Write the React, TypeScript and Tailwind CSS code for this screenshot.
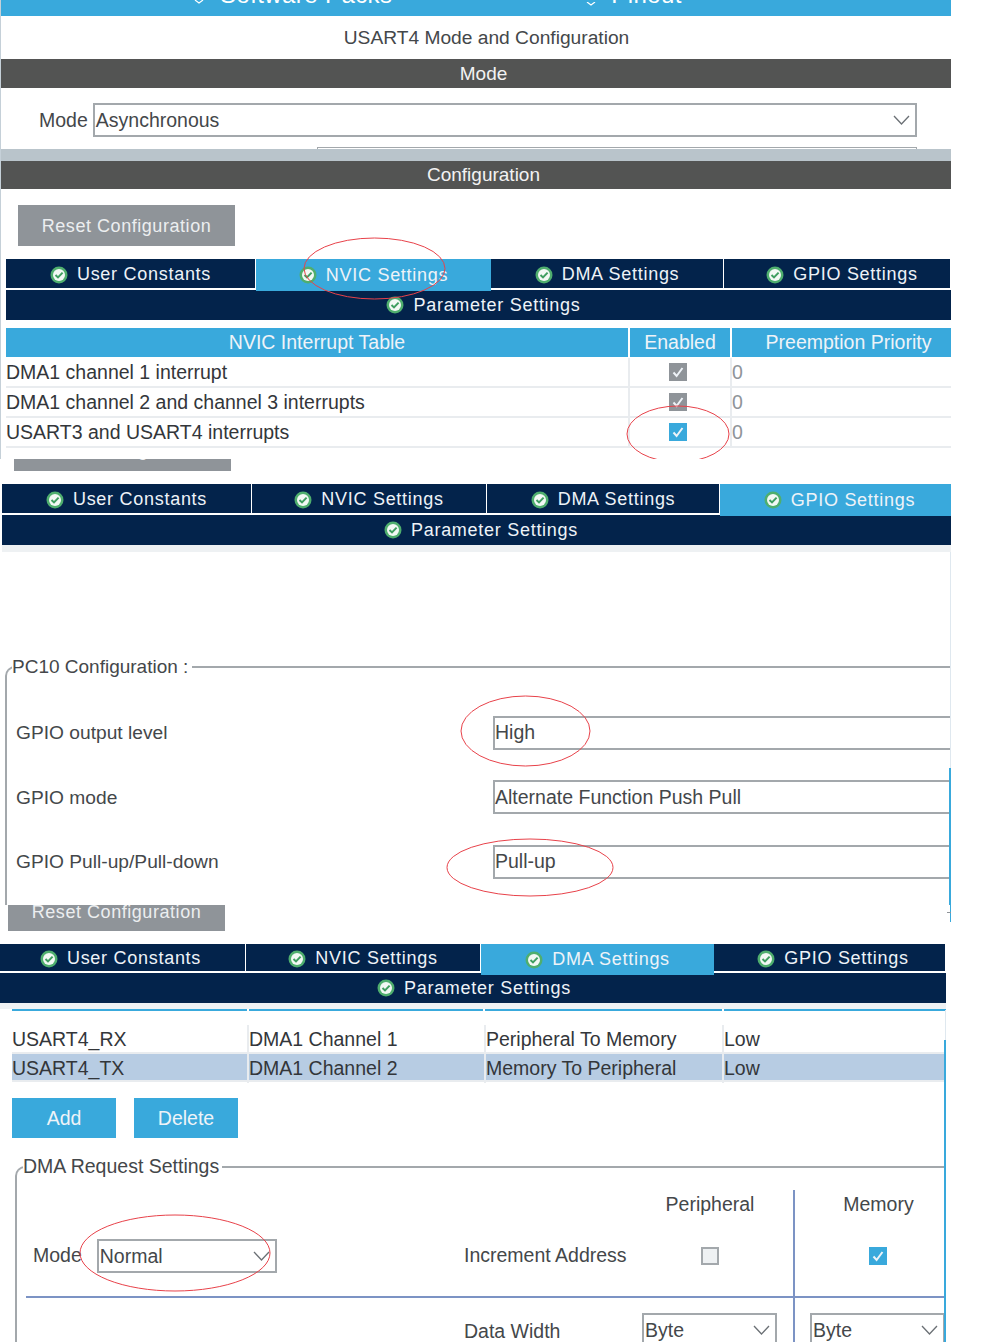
const textFont = "font-['Liberation_Sans',Arial,sans-serif]";

function TabIcon() {
  return (
    <svg width="18" height="18" viewBox="0 0 18 18" className="shrink-0">
      <circle cx="9" cy="9" r="8.5" fill="#4fae6e" />
      <circle cx="9" cy="9" r="6" fill="#f2f8f4" />
      <path d="M5.5 9 L8 11.4 L12.6 6.6" fill="none" stroke="#3f9e60" strokeWidth="2" />
    </svg>
  );
}

function Tab({ label, width, active, compact }: { label: string; width: string; active?: boolean; compact?: boolean }) {
  const idle = compact ? 'h-[29px] pt-[2px]' : 'h-[31px] pt-[2px]';
  const current = compact ? 'h-[31px]' : 'h-[32px]';
  return (
    <div
      className={`${width} flex items-center justify-center gap-[9px] text-[#eef3f8] ${
        active ? `relative z-10 bg-[#39a9dc] ${current}` : `border-r border-b-2 border-white bg-[#03234b] ${idle}`
      }`}
    >
      <TabIcon />
      <span className="tracking-[0.72px]">{label}</span>
    </div>
  );
}

function TabBar({ widths, active, paramPad, compact }: { widths: string[]; active: string; paramPad: string; compact?: boolean }) {
  const names = ['User Constants', 'NVIC Settings', 'DMA Settings', 'GPIO Settings'];
  return (
    <div className="text-[18px]">
      <div className={`flex items-start ${compact ? 'h-[29px]' : 'h-[31px]'}`}>
        {names.map((name, i) => (
          <Tab key={name} label={name} width={widths[i]} active={name === active} compact={compact} />
        ))}
      </div>
      <div className={`flex h-[30px] items-center justify-center gap-[9px] bg-[#03234b] text-[#eef3f8] ${paramPad}`}>
        <TabIcon />
        <span className="tracking-[0.72px]">Parameter Settings</span>
      </div>
    </div>
  );
}

function Check({ color }: { color: string }) {
  return (
    <div className={`flex h-[18px] w-[18px] items-center justify-center ${color}`}>
      <svg width="14" height="14" viewBox="0 0 14 14">
        <path d="M2.5 7.5 L5.6 11 L11.5 3" fill="none" stroke="#eef3f8" strokeWidth="2" />
      </svg>
    </div>
  );
}

function Chevron() {
  return (
    <svg width="17" height="10" viewBox="0 0 17 10" className="shrink-0">
      <path d="M1 1 L8.5 9 L16 1" fill="none" stroke="#6b7075" strokeWidth="1.3" />
    </svg>
  );
}

function Select({ value, className }: { value: string; className: string }) {
  return (
    <div className={`flex h-[34px] items-center justify-between border-2 border-[#a3a8ac] bg-white pl-[1px] pr-[5px] text-[#44474a] ${className}`}>
      <span className="pt-[1px]">{value}</span>
      <Chevron />
    </div>
  );
}

function Ring({ className, w, h }: { className: string; w: number; h: number }) {
  return (
    <svg width={w} height={h} viewBox={`0 0 ${w} ${h}`} className={`pointer-events-none absolute z-20 ${className}`}>
      <ellipse cx={w / 2} cy={h / 2} rx={w / 2 - 1} ry={h / 2 - 1} fill="none" stroke="#e8424a" strokeWidth="1" />
    </svg>
  );
}

function GreyButton({ className }: { className: string }) {
  return (
    <div className={`flex h-[41px] w-[217px] items-center justify-center bg-[#8f9499] text-[18px] tracking-[0.55px] text-[#eceef0] ${className}`}>
      Reset Configuration
    </div>
  );
}

function DarkBar({ label, height }: { label: string; height: string }) {
  return <div className={`flex items-center justify-center bg-[#535453] pl-[15px] text-[19px] text-[#f2f2f2] ${height}`}>{label}</div>;
}

function TopMark() {
  return (
    <svg width="10" height="4" viewBox="0 0 10 4" className="shrink-0 self-start">
      <path d="M1 0 L5 3 L9 0" fill="none" stroke="#ffffff" strokeWidth="1.2" />
    </svg>
  );
}

const nvicRows = [
  { name: 'DMA1 channel 1 interrupt', color: 'bg-[#8f9499]' },
  { name: 'DMA1 channel 2 and channel 3 interrupts', color: 'bg-[#8f9499]' },
  { name: 'USART3 and USART4 interrupts', color: 'bg-[#39a9dc]' },
];

const dmaRows = [
  ['USART4_RX', 'DMA1 Channel 1', 'Peripheral To Memory', 'Low'],
  ['USART4_TX', 'DMA1 Channel 2', 'Memory To Peripheral', 'Low'],
];

const gpioRows = [
  { label: 'GPIO output level', value: 'High' },
  { label: 'GPIO mode', value: 'Alternate Function Push Pull' },
  { label: 'GPIO Pull-up/Pull-down', value: 'Pull-up' },
];

export default function App() {
  return (
    <div className={`h-[1342px] w-[982px] overflow-hidden bg-white text-[19.5px] text-[#44474a] ${textFont}`}>
      {/* NVIC screenshot */}
      <section className="relative h-[459px] w-[951px] overflow-hidden border-l border-l-[#c5d0d8]">
        <div className="flex h-[16px] items-end bg-[#39a9dc] pb-[10px] pl-[193px] text-[24px] leading-[22px] tracking-[0.4px] text-white">
          <TopMark />
          <span className="ml-[16px]">Software Packs</span>
          <span className="ml-[194px]"><TopMark /></span>
          <span className="ml-[15px]">Pinout</span>
        </div>
        <div className="flex h-[43px] items-center justify-center pl-[21px] pt-[2px] text-[19.2px]">USART4 Mode and Configuration</div>
        <DarkBar label="Mode" height="h-[29px] pt-[1px]" />
        <div className="h-[61px] pt-[15px]">
          <div className="flex items-center gap-[5px] pl-[38px] pr-[34px]">
            <span className="pt-[1px]">Mode</span>
            <Select value="Asynchronous" className="flex-1" />
          </div>
          <div className="ml-[316px] mr-[34px] mt-[10px] h-[4px] border-x border-t border-[#a3a8ac]" />
        </div>
        <div className="h-[12px] bg-[#b9c4cb]" />
        <DarkBar label="Configuration" height="h-[28px]" />
        <div className="px-[17px] pt-[16px]">
          <GreyButton className="pt-[2px]" />
        </div>
        <div className="ml-[5px] mt-[13px]">
          <TabBar
            widths={['w-[250px]', 'w-[235px]', 'w-[233px]', 'w-[227px] pl-[10px]']}
            active="NVIC Settings"
            paramPad="pl-[10px]"
          />
          <div className="mt-[8px] flex h-[29px] gap-[2px] text-[#eef3f8]">
            <div className="flex w-[622px] items-center justify-center bg-[#39a9dc]">NVIC Interrupt Table</div>
            <div className="flex w-[100px] items-center justify-center bg-[#39a9dc]">Enabled</div>
            <div className="flex flex-1 items-center justify-center bg-[#39a9dc] pl-[14px]">Preemption Priority</div>
          </div>
          <div className="pt-[1px]">
            {nvicRows.map((row) => (
              <div key={row.name} className="flex h-[30px] border-b-2 border-[#e9ecef]">
                <div className="flex w-[622px] items-center pt-[1px] text-[#33363a]">{row.name}</div>
                <div className="flex w-[104px] items-center justify-center border-x-2 border-[#e9ecef] pr-[4px]">
                  <Check color={row.color} />
                </div>
                <div className="flex flex-1 items-center pt-[1px] text-[#8f9499]">0</div>
              </div>
            ))}
          </div>
        </div>
        <Ring className="left-[302px] top-[237px]" w={143} h={63} />
        <Ring className="left-[625px] top-[405px]" w={104} h={58} />
      </section>

      {/* GPIO screenshot */}
      <section className="relative h-[446px] w-[951px] overflow-hidden pl-[2px]">
        <GreyButton className="-mt-[29px] ml-[12px]" />
        <div className="mt-[13px]">
          <TabBar
            widths={['w-[250px]', 'w-[235px]', 'w-[233px]', 'w-[231px] pl-[8px]']}
            active="GPIO Settings"
            paramPad="pl-[9px]"
          />
        </div>
        <div className="h-[7px] bg-[#eef1f3]" />
        <fieldset className="ml-[3px] mr-[1px] mt-[101px] h-[300px] rounded-tl-[10px] border-t-2 border-l-2 border-[#a3a8ac]">
          <legend className="ml-[5px] pr-[4px] text-[19px]">PC10 Configuration :</legend>
          <div className="pt-[34px]">
            {gpioRows.map((row) => (
              <div key={row.label} className="mb-[30.5px] flex h-[34px] items-center pl-[9px]">
                <span className="w-[477px] shrink-0 pt-[2px] text-[19.2px]">{row.label}</span>
                <div className="flex h-[34px] flex-1 items-center border-y-2 border-l-2 border-[#a3a8ac] pt-[1px]">{row.value}</div>
              </div>
            ))}
          </div>
        </fieldset>
        <Ring className="left-[460px] top-[236px]" w={131} h={72} />
        <Ring className="left-[446px] top-[379px]" w={168} h={59} />
        <div className="absolute right-0 top-[93px] h-[216px] w-[1px] bg-[#dfe8ef]" />
        <div className="absolute right-0 top-[309px] h-[137px] w-[2px] bg-[#39a9dc]" />
      </section>

      {/* DMA screenshot */}
      <section className="relative h-[437px] w-[951px] overflow-hidden">
        <div className="relative flow-root h-[437px] w-[946px]">
          <GreyButton className="-mt-[15px] ml-[8px] pt-[4px]" />
          <div className="mt-[13px]">
            <TabBar
              widths={['w-[246px] pr-[4px]', 'w-[235px]', 'w-[233px]', 'w-[232px] pl-[7px]']}
              active="DMA Settings"
              paramPad="pl-[2px]"
              compact
            />
          </div>
          <div className="h-[6px] bg-[#eef1f3]" />
          <div className="ml-[12px] flex h-[2px] gap-[2px]">
            <div className="w-[235px] bg-[#39a9dc]" />
            <div className="w-[234px] bg-[#39a9dc]" />
            <div className="w-[237px] bg-[#39a9dc]" />
            <div className="flex-1 bg-[#39a9dc]" />
          </div>
          <div className="ml-[12px] mt-[14px]">
            {dmaRows.map((row, i) => (
              <div
                key={row[0]}
                className={`grid grid-cols-[237px_237px_238px_1fr] border-b-2 border-[#e9ecef] ${i === 1 ? 'h-[28px] bg-[#b7cce3]' : 'h-[29px]'}`}
              >
                {row.map((cell) => (
                  <span key={cell} className="flex items-center border-r-2 border-[#e9ecef] text-[#33363a] last:border-r-0">
                    {cell}
                  </span>
                ))}
              </div>
            ))}
          </div>
          <div className="ml-[12px] mt-[16px] flex gap-[18px] text-[#eef3f8]">
            <div className="flex h-[40px] w-[104px] items-center justify-center bg-[#39a9dc] pt-[1px]">Add</div>
            <div className="flex h-[40px] w-[104px] items-center justify-center bg-[#39a9dc] pt-[1px]">Delete</div>
          </div>
          <fieldset className="ml-[15px] mt-[14px] rounded-tl-[10px] border-t-2 border-l-2 border-[#a3a8ac]">
            <legend className="ml-[6px] pr-[3px]">DMA Request Settings</legend>
            <div className="ml-[9px] mt-[9px] grid grid-cols-[438px_178px_151px_1fr] grid-rows-[28px_80px_60px]">
              <div />
              <div />
              <div className="flex items-center justify-center pr-[15px]">Peripheral</div>
              <div className="flex items-center justify-center border-l-2 border-[#7c93c4] pl-[16px]">Memory</div>

              <div className="flex items-center gap-[15px] border-b-2 border-[#7c93c4] pb-[3px] pl-[7px]">
                <span>Mode</span>
                <Select value="Normal" className="w-[180px]" />
              </div>
              <div className="flex items-center border-b-2 border-[#7c93c4] pb-[3px]">Increment Address</div>
              <div className="flex items-center justify-center border-b-2 border-[#7c93c4] pb-[3px] pr-[15px]">
                <div className="h-[18px] w-[18px] border-2 border-[#a3a8ac] bg-[#eef1f3]" />
              </div>
              <div className="flex items-center justify-center border-b-2 border-l-2 border-[#7c93c4] pb-[3px] pl-[15px]">
                <Check color="bg-[#39a9dc]" />
              </div>

              <div />
              <div className="pt-[19px]">Data Width</div>
              <div className="pt-[15px]">
                <Select value="Byte" className="w-[135px]" />
              </div>
              <div className="border-l-2 border-[#7c93c4] pl-[15px] pt-[15px]">
                <Select value="Byte" className="w-[135px]" />
              </div>
            </div>
          </fieldset>
          <Ring className="left-[79px] top-[309px]" w={192} h={78} />
          <div className="absolute right-0 top-[105px] h-[30px] w-[1px] bg-[#dfe8ef]" />
          <div className="absolute right-0 top-[135px] h-[302px] w-[2px] bg-[#39a9dc]" />
        </div>
        <div className="absolute right-0 top-0 h-[17px] w-[1px] bg-[#39a9dc]" />
        <div className="absolute right-0 top-[7px] h-[1px] w-[4px] bg-[#8f9499]" />
      </section>
    </div>
  );
}
